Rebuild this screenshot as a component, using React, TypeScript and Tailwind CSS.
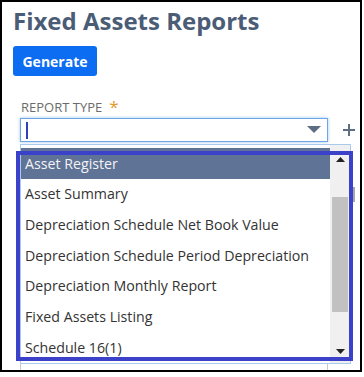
import React from "react";

const items = [
  "Asset Register",
  "Asset Summary",
  "Depreciation Schedule Net Book Value",
  "Depreciation Schedule Period Depreciation",
  "Depreciation Monthly Report",
  "Fixed Assets Listing",
  "Schedule 16(1)",
];

export default function App() {
  return (
    <div className="w-[364px] h-[377px] bg-white">
      <div className="relative w-[362px] h-[372px] border-2 border-black bg-white overflow-hidden font-['Open_Sans',sans-serif]">
        <div className="ml-[11px] mt-[3px] text-[24px] leading-[32px] font-bold text-[#4b5c76] whitespace-nowrap">
          Fixed Assets Reports
        </div>
        <button className="ml-[11px] mt-[9px] w-[84px] h-[30px] rounded-[3px] bg-[#0c6cf2] text-white font-bold text-[14px] flex items-center justify-center">
          Generate
        </button>
        <div className="ml-[19px] mt-[23px] h-[16px] flex items-center text-[13px] leading-[16px] text-[#6b6b6b] uppercase">
          <span>Report Type</span>
          <span className="ml-[7px] text-[17px] leading-[16px] text-[#e39a2b]">*</span>
        </div>
        <div className="mt-[3px] flex items-center">
          <div className="ml-[18px] w-[308px] h-[24px] border border-[#6ea6e4] shadow-[0_0_3px_#9cc4f0] flex items-center">
            <div className="ml-[5px] w-[2px] h-[17px] bg-[#2a43b8]" />
            <div className="flex-1" />
            <svg width="14" height="8" viewBox="0 0 14 8" className="mr-[6px]">
              <polygon points="0,0 14,0 7,7" fill="#5d6d84" />
            </svg>
          </div>
          <svg width="14" height="14" viewBox="0 0 14 14" className="ml-[14px]">
            <path d="M7 1v12M1 7h12" stroke="#5d6d84" strokeWidth="2" />
          </svg>
        </div>
        {/* underlying field partially hidden by the open list */}
        <div className="mt-[40px] flex items-start">
          <div className="ml-[18px] w-[308px] h-[200px] border border-[#c9c9c9]" />
          <div className="ml-[24px] mt-[5px] w-[3px] h-[15px] bg-[#a8a8a8]" />
        </div>

        {/* open dropdown list */}
        <div className="absolute left-[18px] top-[142px] w-[331px] h-[220px] border border-[#a9c9ee] bg-white flex">
          <div className="flex-1 pt-[3px]">
            {items.map((t, i) => (
              <div
                key={t}
                className={
                  "h-[30.67px] flex items-center pl-[4px] text-[14.2px] whitespace-nowrap " +
                  (i === 0 ? "bg-[#5f7396] text-[#f4f4f4]" : "text-[#333333]")
                }
              >
                {t}
              </div>
            ))}
          </div>
          <div className="w-[20px] h-full bg-[#f0f0f0] flex flex-col items-center">
            <div className="h-[12px]" />
            <svg width="9" height="5" viewBox="0 0 9 5">
              <polygon points="0,5 9,5 4.5,0" fill="#222" />
            </svg>
            <div className="h-[35px]" />
            <div className="w-[16px] h-[115px] bg-[#c1c1c1]" />
            <div className="flex-1" />
            <svg width="9" height="5" viewBox="0 0 9 5">
              <polygon points="0,0 9,0 4.5,5" fill="#222" />
            </svg>
            <div className="h-[9px]" />
          </div>
        </div>

        {/* highlight annotation */}
        <div className="absolute left-[14px] top-[149px] w-[337px] h-[210px] border-4 border-[#3b41c8] pointer-events-none" />
      </div>
    </div>
  );
}
